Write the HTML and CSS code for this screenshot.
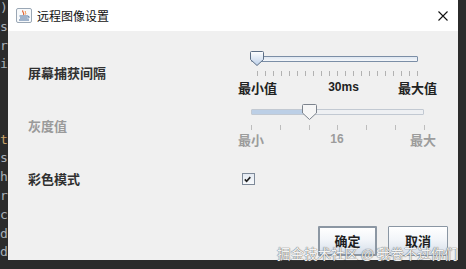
FILE: index.html
```html
<!DOCTYPE html>
<html>
<head>
<meta charset="utf-8">
<link rel="stylesheet" href="styles.css">
</head>
<body>
<div class="screen">
  <div class="code-strip">
    <div class="code-line">)</div>
    <div class="code-line">s</div>
    <div class="code-line">r</div>
    <div class="code-line">i</div>
    <div class="code-line"></div>
    <div class="code-line"></div>
    <div class="code-line"></div>
    <div class="code-line kw">t</div>
    <div class="code-line">s</div>
    <div class="code-line">h</div>
    <div class="code-line">r</div>
    <div class="code-line">c</div>
    <div class="code-line">d</div>
    <div class="code-line">d</div>
  </div>
  <div class="window">
    <div class="titlebar">
      <svg class="app-icon" width="16" height="15" viewBox="0 0 16 15">
        <rect x="0.5" y="0.5" width="15" height="14" rx="1.5" fill="#f7f9fb" stroke="#9aa7b5"/>
        <path d="M7 2.5 C5.5 4 9 5 7.5 7" stroke="#e05a2a" stroke-width="1.2" fill="none"/>
        <path d="M9.5 3 C8.5 4.2 10.5 5 9.5 6.5" stroke="#f08a3a" stroke-width="1" fill="none"/>
        <path d="M3.5 8 H12 M4 10 H11.5 M3 12 H13" stroke="#4a6f9c" stroke-width="1.1"/>
        <path d="M12 8.2 C13.8 8.2 13.8 10.2 11.6 10" stroke="#4a6f9c" stroke-width="0.9" fill="none"/>
      </svg>
      <span class="title">远程图像设置</span>
      <svg class="close" width="10" height="10" viewBox="0 0 10 10">
        <path d="M0.5 0.5 L9.5 9.5 M9.5 0.5 L0.5 9.5" stroke="#111" stroke-width="1.1"/>
      </svg>
    </div>
    <div class="content">
      <div class="row row-one">
        <div class="label">屏幕捕获间隔</div>
        <div class="control">
          <div class="rail rail-one">
            <div class="track track-one"></div>
            <svg class="thumb thumb-one" width="14" height="15" viewBox="0 0 14 15">
              <defs>
                <linearGradient id="tg" x1="0" y1="0" x2="0" y2="1">
                  <stop offset="0" stop-color="#ffffff"/>
                  <stop offset="1" stop-color="#bcd0ea"/>
                </linearGradient>
              </defs>
              <path d="M0.5 1.5 Q0.5 0.5 1.5 0.5 H12.5 Q13.5 0.5 13.5 1.5 V8.5 L7 14.5 L0.5 8.5 Z" fill="url(#tg)" stroke="#5d6f86"/>
            </svg>
          </div>
          <div class="ticks ticks-one">
            <i></i><i></i><i></i><i></i><i></i><i></i><i></i><i></i><i></i><i></i><i></i>
            <i></i><i></i><i></i><i></i><i></i><i></i><i></i><i></i><i></i><i></i>
          </div>
          <div class="scale scale-one">
            <span>最小值</span>
            <span class="mid num mid-one">30ms</span>
            <span>最大值</span>
          </div>
        </div>
      </div>
      <div class="row row-two">
        <div class="label disabled">灰度值</div>
        <div class="control">
          <div class="rail rail-two">
            <div class="track track-two"><div class="track-fill"></div></div>
            <svg class="thumb thumb-two" width="15" height="16" viewBox="0 0 15 16">
              <path d="M0.5 1.5 Q0.5 0.5 1.5 0.5 H13.5 Q14.5 0.5 14.5 1.5 V9 L7.5 15.5 L0.5 9 Z" fill="#f6f6f6" stroke="#7c838d"/>
            </svg>
          </div>
          <div class="ticks ticks-two">
            <i></i><i></i><i></i><i></i><i></i><i></i><i></i>
          </div>
          <div class="scale scale-two">
            <span>最小</span>
            <span class="mid num">16</span>
            <span>最大</span>
          </div>
        </div>
      </div>
      <div class="row row-three">
        <div class="label">彩色模式</div>
        <div class="control">
          <div class="checkbox">
            <svg width="13" height="12" viewBox="0 0 13 12">
              <path d="M3 6.5 L5 8.5 L9 4" stroke="#222" stroke-width="1.8" fill="none"/>
            </svg>
          </div>
        </div>
      </div>
      <div class="buttons">
        <button class="btn btn-default">确定</button>
        <button class="btn">取消</button>
      </div>
    </div>
  </div>
  <div class="watermark">掘金技术社区 @ 我卷不过你们</div>
</div>
</body>
</html>
```

FILE: styles.css
```css
html, body {
  margin: 0;
  padding: 0;
  background: #2b2b2b;
}

.screen {
  position: relative;
  width: 466px;
  height: 269px;
  display: flex;
  align-items: flex-start;
  overflow: hidden;
  background: #2b2b2b;
  font-family: "Noto Sans CJK SC", "Liberation Sans", sans-serif;
}

.code-strip {
  width: 8px;
  overflow: hidden;
  margin-top: -1px;
}

.code-line {
  height: 18.8px;
  line-height: 18.8px;
  font-family: "DejaVu Sans Mono", "Liberation Mono", monospace;
  font-size: 13px;
  color: #a9b0b8;
  white-space: nowrap;
}

.code-line.kw {
  color: #c9a46a;
}

.window {
  width: 450px;
  height: 260px;
  display: flex;
  flex-direction: column;
  background: #f0f0f0;
}

.titlebar {
  height: 31px;
  background: #ffffff;
  display: flex;
  align-items: center;
  padding: 0 10px 0 8px;
  flex-shrink: 0;
}

.app-icon {
  display: block;
}

.title {
  margin-left: 5px;
  font-size: 12px;
  color: #111;
  flex: 1;
}

.close {
  display: block;
}

.content {
  flex: 1;
  padding: 20px 0 0 20px;
  display: flex;
  flex-direction: column;
}

.row {
  display: flex;
  align-items: center;
}

.label {
  width: 210px;
  font-size: 13px;
  font-weight: 700;
  color: #303030;
  line-height: 16px;
}

.label.disabled {
  color: #9a9a9a;
}

.control {
  width: 210px;
  display: flex;
  flex-direction: column;
}

.rail {
  position: relative;
}

.rail-one {
  height: 15px;
}

.rail-two {
  height: 16px;
}

.track {
  box-sizing: border-box;
  margin-left: 13px;
  margin-top: 5px;
  height: 6px;
}

.track-one {
  width: 167px;
  border: 1px solid #7b8ea6;
  border-radius: 1px;
  background: linear-gradient(#dfe7f1, #f4f7fb);
}

.track-two {
  width: 173px;
  border: 1px solid #c2c9d2;
  border-radius: 1px;
  background: #eef0f3;
}

.track-fill {
  width: 58px;
  height: 100%;
  background: #bccfe6;
}

.thumb {
  position: absolute;
  top: 0;
  display: block;
}

.thumb-one {
  left: 12px;
}

.thumb-two {
  left: 64px;
}

.ticks {
  display: flex;
  justify-content: space-between;
  height: 5px;
  margin-top: 5px;
}

.ticks i {
  display: block;
  width: 1px;
  height: 5px;
}

.ticks-one {
  margin-left: 19px;
  width: 161px;
}

.ticks-one i {
  background: #b2b2b2;
}

.ticks-two {
  margin-left: 13px;
  width: 174px;
}

.ticks-two i {
  background: #bdbdbd;
}

.scale {
  display: flex;
  justify-content: space-between;
  height: 15px;
  line-height: 15px;
  font-size: 13px;
  font-weight: 700;
}

.scale-one {
  width: 199px;
  margin-top: 4px;
  color: #222;
}

.scale-two {
  width: 198px;
  margin-top: 2px;
  color: #9c9c9c;
}

.num {
  font-family: "Liberation Sans", sans-serif;
  font-size: 12px;
}

.mid-one {
  padding-left: 12px;
}

.row-two {
  margin-top: 9px;
}

.row-three {
  margin-top: 22px;
  height: 20px;
}

.checkbox {
  margin-left: 4px;
  box-sizing: border-box;
  width: 13px;
  height: 12px;
  border: 1px solid #7e8a99;
  background: linear-gradient(#e4eaf2, #f8fafc);
  display: flex;
}

.checkbox svg {
  display: block;
  margin: -1px 0 0 -1px;
}

.buttons {
  display: flex;
  justify-content: flex-end;
  gap: 11px;
  padding-right: 10px;
  margin-top: 37px;
}

.btn {
  box-sizing: border-box;
  width: 60px;
  height: 30px;
  padding: 0;
  border: 1px solid #8a96a3;
  border-radius: 1px;
  background: linear-gradient(#ffffff 0%, #f2f5f9 45%, #d5dee9 100%);
  font-family: "Noto Sans CJK SC", sans-serif;
  font-size: 13px;
  font-weight: 700;
  color: #1e1e1e;
  line-height: 26px;
}

.btn-default {
  width: 59px;
  border: 2px solid #8c97a3;
}

.watermark {
  position: absolute;
  left: 277px;
  top: 245px;
  font-size: 13.5px;
  line-height: 16px;
  white-space: nowrap;
  color: rgba(252, 252, 252, 0.95);
  text-shadow: 0 0 1px #666, 0 0 1px #666;
}
```
